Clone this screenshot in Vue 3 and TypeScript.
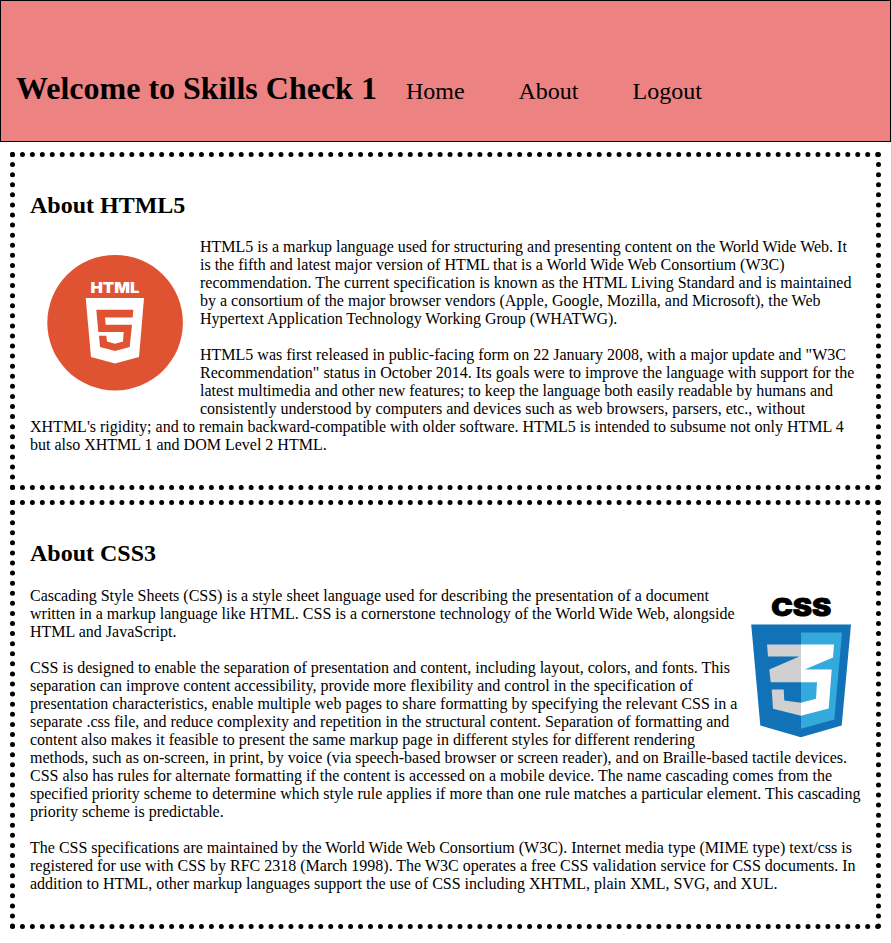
<script setup lang="ts">
const links: string[] = ['Home', 'About', 'Logout']
</script>

<template>
  <div class="page">
    <header class="banner">
      <h1>Welcome to Skills Check 1</h1>
      <nav>
        <a v-for="link in links" :key="link">{{ link }}</a>
      </nav>
    </header>

    <section class="card">
      <h2>About HTML5</h2>
      <svg class="html-logo" viewBox="0 0 170 170" role="img">
        <circle cx="85.1" cy="84.7" r="67.8" fill="#e05332" />
        <text x="60.4" y="54.7" textLength="49" lengthAdjust="spacingAndGlyphs" class="html-word">HTML</text>
        <path fill="#fff" d="M55.7 60H114L109 119L85 125.4L61 119Z" />
        <path
          fill="#e05332"
          d="M66.3 71.7H103.3L102.7 79.4H75L75.7 86.7H102L99.7 109L85 113L70 109L69 97.7H76.3L77 103.4L85 105.7L93 103.4L93.7 94H68.3Z"
        />
      </svg>
      <p>
        HTML5 is a markup language used for structuring and presenting content on the World Wide Web. It is the
        fifth and latest major version of HTML that is a World Wide Web Consortium (W3C) recommendation. The
        current specification is known as the HTML Living Standard and is maintained by a consortium of the major
        browser vendors (Apple, Google, Mozilla, and Microsoft), the Web Hypertext Application Technology Working
        Group (WHATWG).
        <br /><br />
        HTML5 was first released in public-facing form on 22 January 2008, with a major update and "W3C
        Recommendation" status in October 2014. Its goals were to improve the language with support for the latest
        multimedia and other new features; to keep the language both easily readable by humans and consistently
        understood by computers and devices such as web browsers, parsers, etc., without XHTML's rigidity; and to
        remain backward-compatible with older software. HTML5 is intended to subsume not only HTML 4 but also
        XHTML 1 and DOM Level 2 HTML.
      </p>
    </section>

    <section class="card">
      <h2>About CSS3</h2>
      <svg class="css-logo" viewBox="0 0 100 140" role="img">
        <text x="20.2" y="18.8" textLength="60" lengthAdjust="spacingAndGlyphs" class="css-word">CSS</text>
        <path fill="#1172b8" d="M0.2 27.5H100L90.7 128.5L49.8 140.3L9.3 128.5Z" />
        <path fill="#34aadc" d="M50 35.5H91L83.3 122.5L50 131.8Z" />
        <path
          fill="#d0d0d1"
          d="M16 47.5H50V85.2H19.7L18.3 72.5L48.3 59.5H17ZM20.7 92.5H32.7L33.3 103.5L50 105.8V118.8L22 111.8Z"
        />
        <path
          fill="#fff"
          d="M50 47.5H83L82 60.5L53.7 72.5H80.7L77.7 111.5L50 118.8V105.8L65 101.8L66 85.2H50Z"
        />
      </svg>
      <p>
        Cascading Style Sheets (CSS) is a style sheet language used for describing the presentation of a document
        written in a markup language like HTML. CSS is a cornerstone technology of the World Wide Web, alongside
        HTML and JavaScript.
        <br /><br />
        CSS is designed to enable the separation of presentation and content, including layout, colors, and fonts.
        This separation can improve content accessibility, provide more flexibility and control in the
        specification of presentation characteristics, enable multiple web pages to share formatting by specifying
        the relevant CSS in a separate .css file, and reduce complexity and repetition in the structural content.
        Separation of formatting and content also makes it feasible to present the same markup page in different
        styles for different rendering methods, such as on-screen, in print, by voice (via speech-based browser or
        screen reader), and on Braille-based tactile devices. CSS also has rules for alternate formatting if the
        content is accessed on a mobile device. The name cascading comes from the specified priority scheme to
        determine which style rule applies if more than one rule matches a particular element. This cascading
        priority scheme is predictable.
        <br /><br />
        The CSS specifications are maintained by the World Wide Web Consortium (W3C). Internet media type (MIME
        type) text/css is registered for use with CSS by RFC 2318 (March 1998). The W3C operates a free CSS
        validation service for CSS documents. In addition to HTML, other markup languages support the use of CSS
        including XHTML, plain XML, SVG, and XUL.
      </p>
    </section>
  </div>
</template>

<style>
body {
  margin: 0;
  background: #fff;
}
</style>

<style scoped>
.page {
  box-sizing: border-box;
  min-height: 943px;
  border-right: 1px solid #d0d0d0;
  font-family: 'Liberation Serif', 'Times New Roman', serif;
  font-size: 16px;
  line-height: 18px;
  color: #000;
  display: flow-root;
}

.banner {
  box-sizing: border-box;
  height: 142px;
  display: flex;
  align-items: baseline;
  gap: 29px;
  margin-bottom: -0.5px;
  padding: 69px 15px 0;
  border: 1px solid #000;
  background: #ec8281;
}

.banner h1 {
  margin: 0;
  font-size: 32px;
  line-height: 37px;
}

nav {
  display: flex;
  gap: 54px;
  font-size: 24px;
  line-height: 27px;
}

.card {
  margin: 10px;
  padding: 15px;
  border: 5px dotted #000;
}

h2 {
  margin: 20.1px 0 19.74px;
  font-size: 24px;
  line-height: 27px;
}

.card p {
  margin: 0 0 16px;
}

.html-logo {
  float: left;
  width: 170px;
  height: 170px;
}

.css-logo {
  float: right;
  width: 100px;
  height: 140px;
  margin: 10px;
  overflow: visible;
}

.html-word {
  font-family: Inter, sans-serif;
  font-weight: 900;
  font-size: 15px;
  fill: #fff;
}

.css-word {
  font-family: Inter, sans-serif;
  font-weight: 900;
  font-size: 24px;
  fill: #000;
  stroke: #000;
  stroke-width: 0.8px;
}
</style>
